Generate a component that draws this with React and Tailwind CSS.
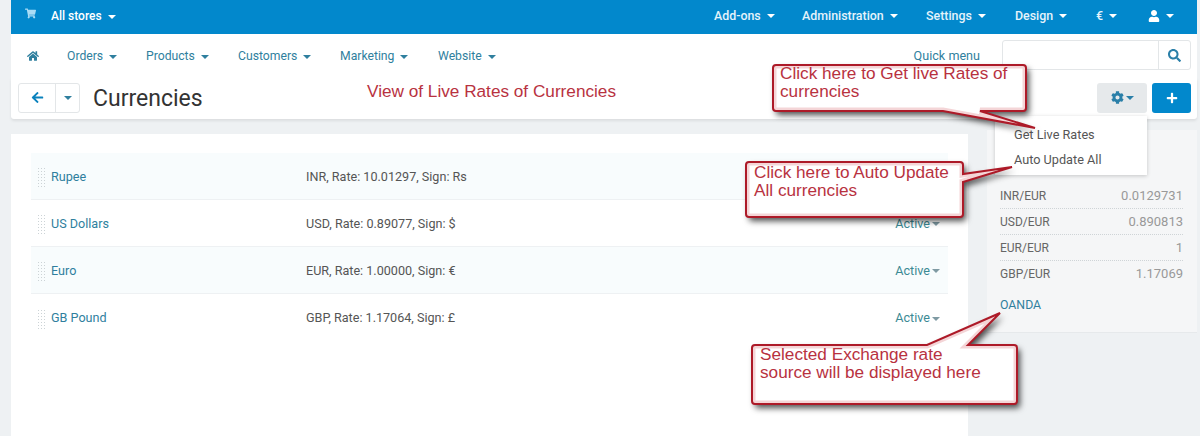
import { FaShoppingCart, FaHome, FaArrowLeft, FaCog, FaPlus, FaSearch, FaUser } from "react-icons/fa";

const Caret = ({ className = "border-t-white" }) => (
  <span className={`inline-block ml-[6px] w-0 h-0 border-x-[4px] border-x-transparent border-t-[4px] align-middle ${className}`} />
);

const topLinks = [
  { label: "Add-ons", w: "w-[88px]" },
  { label: "Administration", w: "w-[124px]" },
  { label: "Settings", w: "w-[89px]" },
  { label: "Design", w: "w-[81px]" },
  { label: "€", w: "w-[52px]" },
];

const navLinks = [
  { label: "Orders", w: "w-[79px]" },
  { label: "Products", w: "w-[92px]" },
  { label: "Customers", w: "w-[102px]" },
  { label: "Marketing", w: "w-[98px]" },
  { label: "Website", w: "w-[70px]" },
];

// the first row's status sits under the callout in the picture, so it has none here
const currencies = [
  { name: "Rupee", info: "INR, Rate: 10.01297, Sign: Rs", shaded: true, hidden: true },
  { name: "US Dollars", info: "USD, Rate: 0.89077, Sign: $" },
  { name: "Euro", info: "EUR, Rate: 1.00000, Sign: €", shaded: true },
  { name: "GB Pound", info: "GBP, Rate: 1.17064, Sign: £", last: true },
];

const rates = [
  ["INR/EUR", "0.0129731"],
  ["USD/EUR", "0.890813"],
  ["EUR/EUR", "1"],
  ["GBP/EUR", "1.17069"],
];

// speech bubbles from the annotated screenshot, drawn in page coordinates
const bubbles = [
  "M776 65H1023Q1026 65 1026 68V108Q1026 111 1023 111H980L1035 128L943 111H776Q773 111 773 108V68Q773 65 776 65Z",
  "M749 162H960Q963 162 963 165V174L1012 167L963 182V214Q963 217 960 217H749Q746 217 746 214V165Q746 162 749 162Z",
  "M755 345H927L1000 313L968 345H1014Q1017 345 1017 348V401Q1017 404 1014 404H755Q752 404 752 401V348Q752 345 755 345Z",
];

const Note = ({ className, children }) => (
  <div className={`absolute font-['Liberation_Sans',sans-serif] text-[17.2px] leading-[17.5px] text-[#b8323f] ${className}`}>
    {children}
  </div>
);

const App = () => {
  return (
    <div className="relative h-[436px] w-[1200px] overflow-hidden bg-[#eef1f3] pl-[11px] pr-[3px] font-['Roboto',sans-serif] text-[12px]">
      <div className="flex h-[34px] items-center bg-[#0288cc] pb-[2px] pl-[14px] text-white">
        <FaShoppingCart className="text-[11px] text-[#a9dcf5] -mt-[6px]" />
        <span className="ml-[15px] flex-1 font-medium">
          All stores
          <Caret />
        </span>
        {topLinks.map((link) => (
          <span key={link.label} className={`${link.w} text-[12.4px] font-medium text-[#e4f3fb]`}>
            {link.label}
            <Caret />
          </span>
        ))}
        <span className="flex w-[38px] items-center">
          <FaUser className="text-[12px]" />
          <Caret />
        </span>
        <span className="w-[11px]" />
      </div>

      <div className="flex h-[44px] items-center bg-white pl-[16px] text-[12.2px] text-[#2f7f9e]">
        <FaHome className="text-[12px]" />
        <div className="ml-[28px] flex flex-1">
          {navLinks.map((link) => (
            <span key={link.label} className={link.w}>
              {link.label}
              <Caret className="border-t-[#2f7f9e]" />
            </span>
          ))}
        </div>
        <span className="mr-[22px] text-[12.6px]">Quick menu</span>
        <div className="-mt-[2px] mr-[6px] flex h-[30px] w-[189px] rounded-[3px] border border-[#e3e6e8]">
          <div className="flex-1" />
          <div className="flex w-[32px] items-center justify-center border-l border-[#e3e6e8]">
            <FaSearch className="text-[13px] text-[#2a7fa8]" />
          </div>
        </div>
      </div>

      <div className="flex h-[41px] items-center rounded-b-[3px] bg-white pb-[2px] pl-[7px] pr-[6px] shadow-[0_2px_3px_rgba(0,0,0,0.08)]">
        <div className="flex h-[30px] w-[62px] rounded-[3px] border border-[#e3e6e8]">
          <div className="flex w-[37px] items-center justify-center border-r border-[#e3e6e8]">
            <FaArrowLeft className="text-[13px] text-[#0a82bd]" />
          </div>
          <div className="flex flex-1 items-center justify-center">
            <Caret className="!ml-0 border-t-[#2f7f9e]" />
          </div>
        </div>
        <h1 className="ml-[13px] mt-[3px] flex-1 text-[23px] font-normal text-[#333]">Currencies</h1>
        <div className="flex h-[30px] w-[50px] items-center justify-center rounded-[3px] bg-[#e6e9eb] text-[#2a7fa8]">
          <FaCog className="text-[13px]" />
          <Caret className="!ml-[2px] border-t-[#2a7fa8]" />
        </div>
        <div className="ml-[5px] flex h-[30px] w-[39px] items-center justify-center rounded-[3px] bg-[#0288cc]">
          <FaPlus className="text-[12px] text-white" />
        </div>
      </div>

      <div className="flex items-start">
        <div className="mt-[15px] h-[320px] w-[957px] bg-white pl-[20px] pr-[20px] pt-[19px]">
          {currencies.map((c) => (
            <div
              key={c.name}
              className={`flex h-[47px] items-center pl-[6px] pt-[2px] text-[12.6px] ${c.last ? "" : "border-b border-[#eef1f3]"} ${c.shaded ? "bg-[#f8fcfd]" : ""}`}
            >
              <span className="h-[20px] w-[8px] bg-[radial-gradient(#ccd3d6_1px,transparent_1px)] bg-[length:3px_3px]" />
              <span className="ml-[6px] w-[255px] text-[#2f7f9e]">{c.name}</span>
              <span className="flex-1 text-[#555]">{c.info}</span>
              {!c.hidden && (
                <span className="mr-[8px] text-[#3b8a94]">
                  Active
                  <Caret className="!ml-[2px] border-t-[#7f9aa3]" />
                </span>
              )}
            </div>
          ))}
        </div>

        <div className="ml-[19px] mt-[11px] h-[203px] w-[210px] border-b border-[#e6e9eb] bg-[#f5f6f7] pl-[13px] pr-[14px] pt-[53px]">
          {rates.map(([pair, value], i) => (
            <div
              key={pair}
              className={`flex h-[26px] items-center justify-between ${i < 3 ? "border-b border-dotted border-[#cfd4d7]" : ""}`}
            >
              <span className="text-[#666]">{pair}</span>
              <span className="text-[13px] text-[#999]">{value}</span>
            </div>
          ))}
          <div className="mt-[9px] text-[12.3px] text-[#2f7f9e]">OANDA</div>
        </div>
      </div>

      <div className="absolute left-[995px] top-[116px] h-[59px] w-[152px] bg-white pl-[19px] pt-[9px] text-[12.7px] text-[#555] shadow-[0_1px_4px_rgba(0,0,0,0.2)]">
        <div className="h-[25px]">Get Live Rates</div>
        <div>Auto Update All</div>
      </div>

      <svg className="absolute left-0 top-0" width="1200" height="436">
        <defs>
          <filter id="bubbleShadow" x="-10%" y="-20%" width="125%" height="160%">
            <feDropShadow dx="3" dy="4" stdDeviation="3" floodColor="#000" floodOpacity="0.7" />
          </filter>
          {bubbles.map((d, i) => (
            <clipPath key={d} id={`bubbleClip${i}`}>
              <path d={d} />
            </clipPath>
          ))}
        </defs>
        {bubbles.map((d, i) => (
          <g key={d}>
            <path d={d} fill="#fff" filter="url(#bubbleShadow)" />
            <path d={d} fill="none" stroke="#f4d5d7" strokeWidth="7" clipPath={`url(#bubbleClip${i})`} />
            <path d={d} fill="none" stroke="#ad1a28" strokeWidth="2" />
          </g>
        ))}
      </svg>

      <div className="absolute left-[367px] top-[79px] font-['Liberation_Sans',sans-serif] text-[17.2px] text-[#b8323f]">
        View of Live Rates of Currencies
      </div>
      <Note className="left-[780px] top-[65px]">
        Click here to Get live Rates of
        <br />
        currencies
      </Note>
      <Note className="left-[754px] top-[164px]">
        Click here to Auto Update
        <br />
        All currencies
      </Note>
      <Note className="left-[760px] top-[346px]">
        Selected Exchange rate
        <br />
        source will be displayed here
      </Note>
    </div>
  );
};

export default App;
